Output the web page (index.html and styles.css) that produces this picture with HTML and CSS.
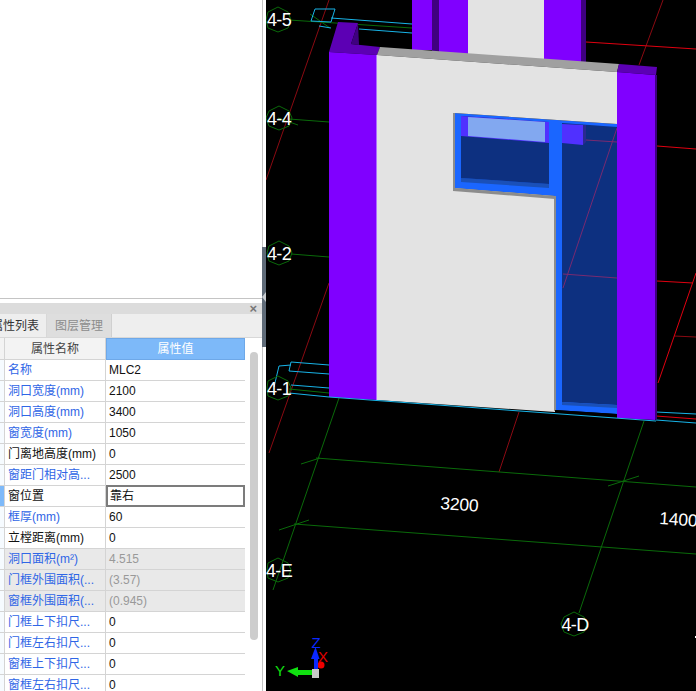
FILE: index.html
```html
<!DOCTYPE html>
<html lang="zh">
<head>
<meta charset="utf-8">
<title>属性列表</title>
<link rel="stylesheet" href="styles.css">
</head>
<body>
<div class="app">
  <aside class="side">
    <div class="blank"></div>
    <div class="panel">
      <div class="panel-bar"><span class="close">×</span></div>
      <div class="tabs">
        <div class="tab tab-on"><span class="tab-clip">属性列表</span></div>
        <div class="tab tab-off">图层管理</div>
      </div>
      <div class="body">
        <div class="grid">
          <div class="row head"><i class="gut"></i><div class="name">属性名称</div><div class="val">属性值</div></div>
          <div class="row"><i class="gut"></i><div class="name link">名称</div><div class="val">MLC2</div></div>
          <div class="row"><i class="gut"></i><div class="name link">洞口宽度(mm)</div><div class="val">2100</div></div>
          <div class="row"><i class="gut"></i><div class="name link">洞口高度(mm)</div><div class="val">3400</div></div>
          <div class="row"><i class="gut"></i><div class="name link">窗宽度(mm)</div><div class="val">1050</div></div>
          <div class="row"><i class="gut"></i><div class="name">门离地高度(mm)</div><div class="val">0</div></div>
          <div class="row"><i class="gut"></i><div class="name link">窗距门相对高...</div><div class="val">2500</div></div>
          <div class="row picked"><i class="gut"></i><div class="name">窗位置</div><div class="val">靠右</div></div>
          <div class="row"><i class="gut"></i><div class="name link">框厚(mm)</div><div class="val">60</div></div>
          <div class="row"><i class="gut"></i><div class="name">立樘距离(mm)</div><div class="val">0</div></div>
          <div class="row off"><i class="gut"></i><div class="name link">洞口面积(m²)</div><div class="val">4.515</div></div>
          <div class="row off"><i class="gut"></i><div class="name link">门框外围面积(...</div><div class="val">(3.57)</div></div>
          <div class="row off"><i class="gut"></i><div class="name link">窗框外围面积(...</div><div class="val">(0.945)</div></div>
          <div class="row"><i class="gut"></i><div class="name link">门框上下扣尺...</div><div class="val">0</div></div>
          <div class="row"><i class="gut"></i><div class="name link">门框左右扣尺...</div><div class="val">0</div></div>
          <div class="row"><i class="gut"></i><div class="name link">窗框上下扣尺...</div><div class="val">0</div></div>
          <div class="row"><i class="gut"></i><div class="name link">窗框左右扣尺...</div><div class="val">0</div></div>
        </div>
        <div class="scroll"><div class="thumb"></div></div>
      </div>
    </div>
  </aside>
  <div class="splitter"><div class="grip"><span class="arrow"></span></div></div>
  <svg class="view" viewBox="266 0 430 691" xmlns="http://www.w3.org/2000/svg">
    <!-- grid lines behind the model -->
    <g class="l-dred">
      <path d="M329 0L266 180M329 283L269 453M663 0L639 65M519 412L499 472M674 336L696 337"/>
    </g>
    <g class="l-red">
      <path d="M586 42L696 49M657 146L696 149M657 281L693 283M696 273L658 383M656 416L696 419"/>
    </g>
    <g class="l-green">
      <path d="M289 20L412 28M289 119L329 122M291 254L329 257M289 389L329 393"/>
      <path d="M339 398L273 590M644 421L579 613"/>
      <path d="M316 458L696 487M294 524L696 554"/>
      <path d="M301 464L320 458M608 486L639 476M279 530L309 520M278 118L298 125M310 14L330 28"/>
    </g>
    <g class="l-cyan">
      <path d="M315 9L335 9L331 22L311 21Z"/>
      <path d="M331 18L412 24M319 26L331 28M359 29L412 33"/>
      <path d="M291 362L329 365M279 366L291 365M291 362L289 371L329 374M279 366L274 387M291 385L329 388M289 393L329 397M656 412L696 414M656 420L696 423"/>
    </g>

    <!-- rear building -->
    <rect class="f-purple" x="412" y="0" width="20" height="50"/>
    <rect class="f-deep" x="432" y="0" width="7" height="52"/>
    <rect class="f-purple" x="439" y="0" width="29" height="54"/>
    <rect class="f-wall" x="468" y="0" width="76" height="60"/>
    <rect class="f-purple" x="544" y="0" width="37" height="64"/>
    <rect class="f-deep" x="581" y="0" width="5" height="64"/>

    <!-- front wall -->
    <polygon class="f-dark" points="329,52 338,22 358,23 351,44 380,47 377,55"/>
    <polygon class="f-deep" points="358,23 351,44 359,45"/>
    <polygon class="f-grey" points="380,47 619,64 617,72 377,55"/>
    <polygon class="f-dark" points="619,64 657,67 656,75 617,72"/>

    <!-- door and window opening -->
    <polygon class="f-frame" points="454,113 617,124 617,414 555,410 555,196 454,188"/>
    <polygon class="f-mid" points="461,178 549,184 549,188 461,182"/>
    <polygon class="f-navy" points="461,116 549,122 549,184 461,178"/>
    <polygon class="f-violet" points="461,116 549,122 549,143 461,136"/>
    <polygon class="f-pale" points="468,117 545,122 545,142 468,136"/>
    <polygon class="f-navy" points="562,123 617,127 617,405 562,402"/>
    <polygon class="f-mid" points="562,402 617,405 617,408 562,405"/>
    <polygon class="f-violet" points="562,124 583,125 583,145 562,143"/>
    <polygon class="f-indigo" points="583,125 586,125 586,142 583,145"/>
    <g class="l-plum">
      <path d="M586 140L617 142M617 128L563 288M563 274L617 278"/>
    </g>

    <polygon class="f-wall" points="377,55 617,72 617,124 454,113 454,188 555,196 555,412 377,400"/>
    <polygon class="f-edge" points="453,113 455,113 455,188 555,196 555,199 453,191"/>
    <rect class="f-edge" x="554" y="196" width="2" height="215"/>
    <polygon class="f-black" points="555,410 617,414 617,417 555,413"/>

    <polygon class="f-purple" points="329,52 377,55 377,400 329,397"/>
    <rect class="f-edge-lt" x="376" y="55" width="1" height="345"/>
    <polygon class="f-purple" points="617,72 655,75 655,420 617,418"/>
    <polygon class="f-deep" points="655,75 657,75 657,419 655,420"/>
    <path class="l-cyan" d="M329 397L656 421"/>

    <!-- axis bubbles -->
    <g class="bubble">
      <polygon points="278,7 288,12 291,20 288,28 278,32 268,28 266,20 268,12"/>
      <polygon points="279,106 289,111 292,118 289,126 279,130 269,126 266,118 269,111"/>
      <polygon points="279,241 289,246 292,253 289,261 279,265 269,261 267,253 269,246"/>
      <polygon points="278,376 288,381 291,388 288,396 278,400 268,396 267,388 268,381"/>
      <polygon points="278,558 288,563 291,570 288,578 278,582 268,578 267,570 268,563"/>
      <polygon points="574,612 584,617 587,624 584,632 574,636 564,632 561,624 564,617"/>
    </g>
    <g class="axis-text">
      <text x="279" y="26">4-5</text>
      <text x="279" y="125">4-4</text>
      <text x="279" y="260">4-2</text>
      <text x="279" y="395">4-1</text>
      <text x="279" y="577">4-E</text>
      <text x="575" y="631">4-D</text>
    </g>
    <text class="dim" transform="translate(440 509) rotate(4)">3200</text>
    <text class="dim" transform="translate(659 524) rotate(4)">1400</text>
    <rect class="f-white" x="695" y="636" width="1" height="2"/>

    <!-- orientation gizmo -->
    <g>
      <circle class="g-red" cx="321" cy="665" r="3.5"/>
      <text class="g-label g-x" x="323" y="662">X</text>
      <rect class="g-blue" x="314" y="656" width="4" height="14"/>
      <polygon class="g-blue" points="315.500,647 319.500,659 311,659"/>
      <text class="g-label g-z" x="316" y="648">Z</text>
      <rect class="g-green" x="297" y="670" width="15" height="5"/>
      <polygon class="g-green" points="287,671 298,667 298,677"/>
      <text class="g-label g-y" x="280" y="676">Y</text>
      <rect class="g-cube" x="312" y="669" width="7" height="9"/>
    </g>
  </svg>
</div>
</body>
</html>
```
FILE: styles.css
```css
* { box-sizing: border-box; }
html, body { margin: 0; height: 100%; overflow: hidden; background: #000; }
body { font: 12px/1 "Liberation Sans", "Noto Sans CJK SC", sans-serif; color: #111; }

.app { display: flex; width: 696px; height: 691px; overflow: hidden; }

.side { flex: 0 0 262px; display: flex; flex-direction: column; background: #fff; overflow: hidden; }
.blank { flex: 0 0 299px; border-bottom: 1px solid #c4c4c4; }
.panel { flex: 1; display: flex; flex-direction: column; margin-top: 4px; min-height: 0; }
.panel-bar { flex: 0 0 11px; background: #dcdcdc; display: flex; justify-content: flex-end; align-items: center; padding-right: 5px; }
.close { font-size: 13px; line-height: 11px; color: #777; font-weight: bold; }
.tabs { flex: 0 0 24px; display: flex; background: #eee; border-bottom: 1px solid #d8d8d8; }
.tab { height: 23px; display: flex; align-items: center; font-size: 12px; }
.tab-on { width: 47px; overflow: hidden; color: #333; background: #eee; border-right: 1px solid #d8d8d8; }
.tab-clip { flex: none; margin-left: -9px; }
.tab-off { width: 65px; justify-content: center; color: #8c8c8c; background: #dedede; border-right: 1px solid #d0d0d0; }

.body { flex: 1; display: flex; min-height: 0; overflow: hidden; }
.grid { flex: 0 0 245px; }
.row { display: grid; grid-template-columns: 5px 101px 139px; height: 21px; }
.gut { background: #f6fbff; border-right: 1px solid #d4d4d4; border-bottom: 1px solid #d4d4d4; }
.name, .val { display: flex; align-items: center; white-space: nowrap; border-bottom: 1px solid #d4d4d4; overflow: hidden; }
.name { padding-left: 3px; border-right: 1px solid #d4d4d4; }
.val { padding-left: 3px; }
.link { color: #2f66e6; }

.head { height: 22px; }
.head .name { justify-content: center; background: #f3f3f3; color: #444; padding-left: 0; }
.head .gut { background: #f3f3f3; }
.head .val { justify-content: center; background: #7db9f9; color: #fff; padding-left: 0; border: 1px solid #6ea8e8; }

.picked .gut { background: #7db9f9; }
.picked .val { border: 2px solid #7c7c7c; padding-left: 2px; margin-top: -1px; height: 22px; }
.off .name, .off .val { background: #e9e9e9; }
.off .val { color: #999; }

.scroll { flex: 1; padding: 14px 4px 0 5px; }
.thumb { width: 8px; height: 288px; border-radius: 4px; background: #cdcdcd; }

.splitter { flex: 0 0 4px; position: relative; background: #fff; border-left: 1px solid #c4c4c4; }
.grip { position: absolute; left: -1px; top: 247px; width: 4px; height: 100px; background: #5f6b78; }
.arrow { position: absolute; left: 0; top: 45px; border: 5px solid transparent; border-left-width: 0; border-right: 4px solid #c8ccd0; }

.view { flex: none; display: block; width: 430px; height: 691px; background: #000; }
.view path { fill: none; }
.l-dred path { stroke: #8a0a12; stroke-width: 1; }
.l-red path { stroke: #e00010; stroke-width: 1; }
.l-green path { stroke: #0a6a0a; stroke-width: 1; }
.l-cyan path, path.l-cyan { stroke: #18b4e8; stroke-width: 1; }
.l-plum path { stroke: #7a2a70; stroke-width: 1; }

.f-purple { fill: #8000ff; }
.f-deep { fill: #3f0080; }
.f-dark { fill: #5c00b4; }
.f-wall { fill: #e3e3e3; }
.f-grey { fill: #a0a0a0; }
.f-frame { fill: #1a66ff; }
.f-navy { fill: #0d3080; }
.f-mid { fill: #1a50b8; }
.f-violet { fill: #5030ff; }
.f-indigo { fill: #2a2a90; }
.f-pale { fill: #82a8f0; }
.f-edge { fill: #8c8c8c; }
.f-edge-lt { fill: #b070ff; }
.f-black { fill: #000; }
.f-white { fill: #fff; }

.bubble polygon { fill: none; stroke: #0a6a0a; stroke-width: 1; }
.axis-text text { fill: #fff; font: 18px "Liberation Sans", sans-serif; text-anchor: middle; letter-spacing: -0.6px; }
.dim { fill: #fff; font: 17.500px "Liberation Sans", sans-serif; letter-spacing: -0.2px; }

.g-red { fill: #f00000; }
.g-blue { fill: #0a28ff; }
.g-green { fill: #10e010; }
.g-cube { fill: #c8c8c8; }
.g-label { font: 15px "Liberation Sans", sans-serif; text-anchor: middle; }
.g-x { fill: #e00000; }
.g-z { fill: #0a28ff; }
.g-y { fill: #10e010; }
```
